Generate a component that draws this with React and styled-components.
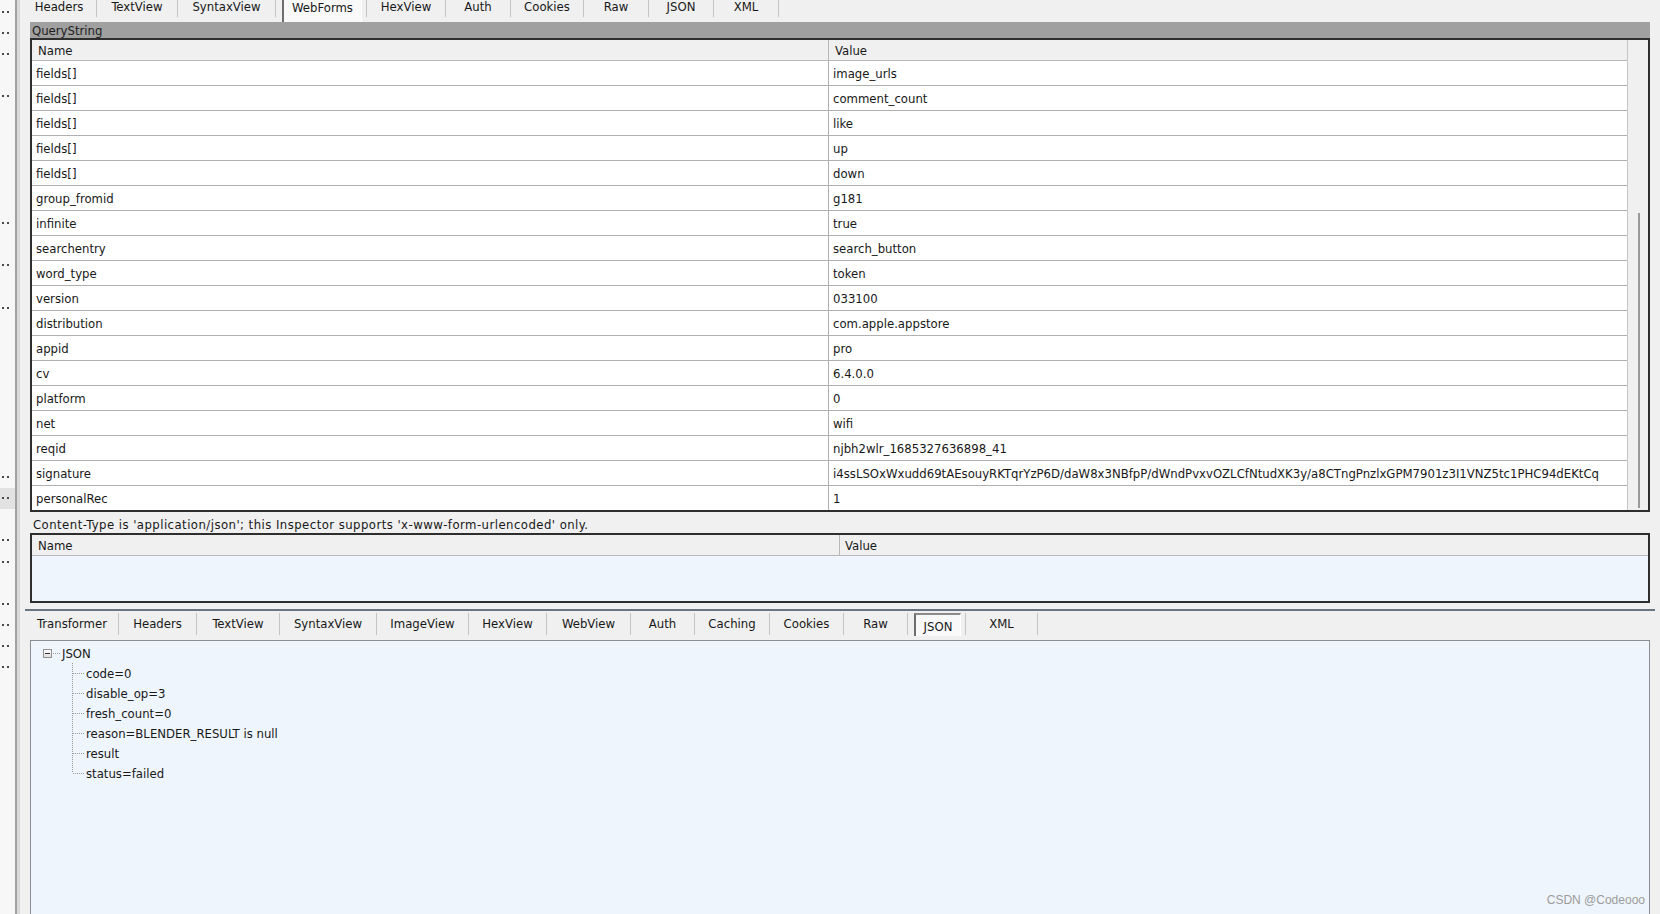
import React from 'react';
import styled, { createGlobalStyle } from 'styled-components';

const GlobalStyle = createGlobalStyle`
  html, body {
    margin: 0;
    padding: 0;
    background: #f0f0f0;
  }
  body {
    font-family: "DejaVu Sans Condensed", "DejaVu Sans", "Liberation Sans", sans-serif;
    font-stretch: condensed;
    font-size: 13px;
    color: #181818;
  }
`;

const requestTabs = [
  { label: 'Headers', w: 75 },
  { label: 'TextView', w: 81 },
  { label: 'SyntaxView', w: 98 },
  { label: 'WebForms', w: 91, active: true },
  { label: 'HexView', w: 79 },
  { label: 'Auth', w: 65 },
  { label: 'Cookies', w: 73 },
  { label: 'Raw', w: 65 },
  { label: 'JSON', w: 65 },
  { label: 'XML', w: 65 },
];

const responseTabs = [
  { label: 'Transformer', w: 93 },
  { label: 'Headers', w: 78 },
  { label: 'TextView', w: 83 },
  { label: 'SyntaxView', w: 97 },
  { label: 'ImageView', w: 92 },
  { label: 'HexView', w: 78 },
  { label: 'WebView', w: 84 },
  { label: 'Auth', w: 64 },
  { label: 'Caching', w: 75 },
  { label: 'Cookies', w: 74 },
  { label: 'Raw', w: 64 },
  { label: 'JSON', w: 58, active: true },
  { label: 'XML', w: 72 },
];

const queryParams = [
  ['fields[]', 'image_urls'],
  ['fields[]', 'comment_count'],
  ['fields[]', 'like'],
  ['fields[]', 'up'],
  ['fields[]', 'down'],
  ['group_fromid', 'g181'],
  ['infinite', 'true'],
  ['searchentry', 'search_button'],
  ['word_type', 'token'],
  ['version', '033100'],
  ['distribution', 'com.apple.appstore'],
  ['appid', 'pro'],
  ['cv', '6.4.0.0'],
  ['platform', '0'],
  ['net', 'wifi'],
  ['reqid', 'njbh2wlr_1685327636898_41'],
  ['signature', 'i4ssLSOxWxudd69tAEsouyRKTqrYzP6D/daW8x3NBfpP/dWndPvxvOZLCfNtudXK3y/a8CTngPnzlxGPM7901z3I1VNZ5tc1PHC94dEKtCq'],
  ['personalRec', '1'],
];

const jsonChildren = [
  'code=0',
  'disable_op=3',
  'fresh_count=0',
  'reason=BLENDER_RESULT is null',
  'result',
  'status=failed',
];

// rows of the session list that still show a truncated "..." at this width
const dottedRows = [0, 1, 2, 4, 10, 12, 14, 22, 23, 25, 26, 28, 29, 30, 31];

const Window = styled.div`
  position: relative;
  width: 1660px;
  height: 914px;
  display: flex;
  overflow: hidden;
  background: #f0f0f0;
`;

const SessionList = styled.div`
  flex: none;
  width: 15px;
  padding-top: 1px;
  display: flex;
  flex-direction: column;
  background: #f7f7f7;
`;

const ListRow = styled.div`
  flex: none;
  height: 21.17px;
  display: flex;
  align-items: center;
  padding-left: 2px;
  background: ${p => (p.$selected ? '#e2e2e2' : 'transparent')};
`;

const Ellipsis = styled.span`
  width: 2px;
  height: 2px;
  background: #4a4a4a;
  box-shadow: 5px 0 #4a4a4a;
`;

const Splitter = styled.div`
  flex: none;
  width: 5px;
  box-sizing: border-box;
  border-left: 2px solid #a2a2a2;
  background: #d9d9d9;
`;

const Main = styled.div`
  flex: 1;
  min-width: 0;
  display: flex;
  flex-direction: column;
`;

const TopTabs = styled.div`
  flex: none;
  height: 22px;
  padding-left: 2px;
  display: flex;
  align-items: flex-start;
`;

const Tab = styled.div`
  flex: none;
  box-sizing: border-box;
  width: ${p => p.$w}px;
  height: ${p => p.$h}px;
  border-right: 1px solid #c4c4c4;
  display: flex;
  justify-content: center;
  line-height: ${p => p.$lh}px;
  white-space: nowrap;
`;

const ActiveFace = styled.div`
  flex: 1;
  box-sizing: border-box;
  margin: 0 4px 0 6px;
  height: ${p => p.$h}px;
  padding-top: ${p => p.$pt}px;
  border-left: 2px solid #6e6e6e;
  border-top: ${p => (p.$top ? '2px solid #8a8a8a' : 'none')};
  border-right: 1px solid #ffffff;
  background: #f9f9f9;
  text-align: center;
`;

const RequestBody = styled.div`
  flex: none;
  padding: 0 10px;
  display: flex;
  flex-direction: column;
`;

const SectionBar = styled.div`
  height: 16px;
  padding-left: 2px;
  line-height: 18px;
  overflow: hidden;
  background: #a0a0a0;
  color: #1e1e1e;
`;

const Table = styled.div`
  display: flex;
  border: 2px solid #2e2e2e;
  background: ${p => p.$bg};
`;

const Grid = styled.div`
  flex: 1;
  min-width: 0;
  display: grid;
  grid-template-columns: ${p => p.$nameWidth}px 1fr;
  align-content: start;
`;

const HeadCell = styled.div`
  height: 20px;
  line-height: 22px;
  overflow: hidden;
  padding-left: ${p => p.$pad}px;
  background: #f0f0f0;
  border-bottom: 1px solid #b8b8b8;
  border-right: ${p => (p.$first ? '1px solid #b8b8b8' : 'none')};
  white-space: nowrap;
`;

const Cell = styled.div`
  height: 24px;
  line-height: 26px;
  padding-left: 4px;
  background: #ffffff;
  border-bottom: ${p => (p.$last ? 'none' : '1px solid #b0b0b0')};
  border-right: ${p => (p.$first ? '1px solid #b0b0b0' : 'none')};
  white-space: nowrap;
  overflow: hidden;
`;

const ScrollTrack = styled.div`
  flex: none;
  width: 21px;
  box-sizing: border-box;
  border-left: 1px solid #c6c6c6;
  background: #f0f0f0;
  padding: 173px 0 0 10px;
`;

const ScrollThumb = styled.div`
  width: 2px;
  height: 295px;
  background: #9a9a9a;
`;

const InfoLine = styled.div`
  height: 21px;
  box-sizing: border-box;
  padding: 4px 0 0 3px;
  line-height: 17px;
  letter-spacing: 0.45px;
  white-space: nowrap;
`;

const EmptyBody = styled.div`
  grid-column: 1 / -1;
  height: 45px;
`;

const ResponsePanel = styled.div`
  flex: 1;
  min-height: 0;
  margin: 6px 5px 0 5px;
  border-top: 2px solid #6a7583;
  display: flex;
  flex-direction: column;
`;

const BottomTabs = styled.div`
  flex: none;
  height: 24px;
  padding: 2px 0 0 1px;
  box-sizing: border-box;
  display: flex;
  align-items: flex-start;
`;

const TreePane = styled.div`
  flex: 1;
  margin: 5px 5px 0 5px;
  padding: 2px 0 0 12px;
  border: 1px solid #8a8d92;
  border-bottom: none;
  background: #eef5fd;
`;

const TreeRow = styled.div`
  height: 20px;
  display: flex;
  align-items: center;
  white-space: nowrap;
`;

const Expander = styled.span`
  position: relative;
  flex: none;
  width: 9px;
  height: 9px;
  box-sizing: border-box;
  border: 1px solid #919191;
  background: linear-gradient(#ffffff, #dedede);

  &::after {
    content: '';
    position: absolute;
    left: 1px;
    top: 3px;
    width: 5px;
    height: 1px;
    background: #333;
  }
`;

const Connector = styled.span`
  flex: none;
  width: 7px;
  margin: 0 2px 0 1px;
  border-top: 1px dotted #9a9a9a;
`;

const Children = styled.div`
  margin-left: 29px;
`;

const Branch = styled.span`
  flex: none;
  align-self: stretch;
  width: 13px;
  margin-right: 1px;
  background:
    repeating-linear-gradient(to right, #9a9a9a 0 1px, transparent 1px 2px) 1px 50% / 12px 1px no-repeat,
    repeating-linear-gradient(to bottom, #9a9a9a 0 1px, transparent 1px 2px) 0 0 / 1px ${p => (p.$last ? '50%' : '100%')} no-repeat;
`;

const Watermark = styled.div`
  position: absolute;
  right: 15px;
  bottom: 7px;
  font-family: "Liberation Sans", Arial, sans-serif;
  font-size: 12px;
  line-height: 14px;
  color: #9c9c9c;
`;

const TabStrip = ({ tabs, height, lineHeight, faceHeight, facePad, faceTop }) =>
  tabs.map(t => (
    <Tab key={t.label} $w={t.w} $h={height} $lh={lineHeight}>
      {t.active ? (
        <ActiveFace $h={faceHeight} $pt={facePad} $top={faceTop}>{t.label}</ActiveFace>
      ) : (
        t.label
      )}
    </Tab>
  ));

const App = () => {
  const listRows = Array.from({ length: 44 }, (_, i) => i);

  return (
    <Window>
      <GlobalStyle />
      <SessionList>
        {listRows.map(i => (
          <ListRow key={i} $selected={i === 23}>
            {dottedRows.includes(i) && <Ellipsis />}
          </ListRow>
        ))}
      </SessionList>
      <Splitter />

      <Main>
        <TopTabs>
          <TabStrip tabs={requestTabs} height={17} lineHeight={14} faceHeight={22} facePad={1} />
        </TopTabs>

        <RequestBody>
          <SectionBar>QueryString</SectionBar>
          <Table $bg="#ffffff">
            <Grid $nameWidth={797}>
              <HeadCell $first $pad={6}>Name</HeadCell>
              <HeadCell $pad={6}>Value</HeadCell>
              {queryParams.map(([name, value], i) => {
                const last = i === queryParams.length - 1;
                return (
                  <React.Fragment key={i}>
                    <Cell $first $last={last}>{name}</Cell>
                    <Cell $last={last}>{value}</Cell>
                  </React.Fragment>
                );
              })}
            </Grid>
            <ScrollTrack>
              <ScrollThumb />
            </ScrollTrack>
          </Table>

          <InfoLine>
            Content-Type is 'application/json'; this Inspector supports 'x-www-form-urlencoded' only.
          </InfoLine>

          <Table $bg="#eef5fd">
            <Grid $nameWidth={808}>
              <HeadCell $first $pad={6}>Name</HeadCell>
              <HeadCell $pad={5}>Value</HeadCell>
              <EmptyBody />
            </Grid>
          </Table>
        </RequestBody>

        <ResponsePanel>
          <BottomTabs>
            <TabStrip tabs={responseTabs} height={22} lineHeight={21} faceHeight={23} facePad={1} faceTop />
          </BottomTabs>
          <TreePane>
            <TreeRow>
              <Expander />
              <Connector />
              JSON
            </TreeRow>
            <Children>
              {jsonChildren.map((c, i) => (
                <TreeRow key={c}>
                  <Branch $last={i === jsonChildren.length - 1} />
                  {c}
                </TreeRow>
              ))}
            </Children>
          </TreePane>
        </ResponsePanel>
      </Main>

      <Watermark>CSDN @Codeooo</Watermark>
    </Window>
  );
};

export default App;
